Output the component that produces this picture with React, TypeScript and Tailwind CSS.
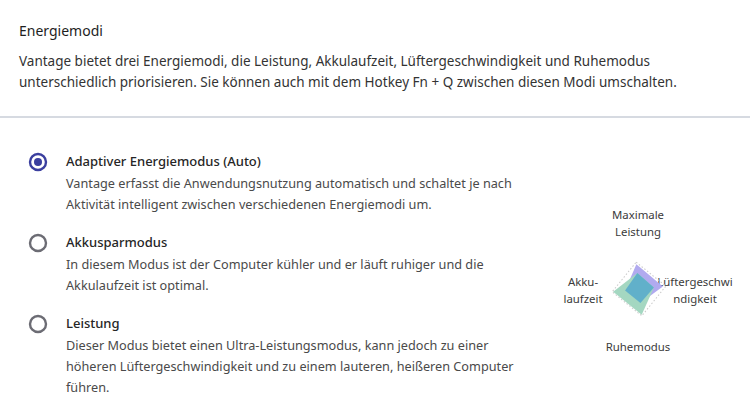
import React from "react";

function Radio({ checked }: { checked?: boolean }) {
  return checked ? (
    <svg width="20" height="20" viewBox="0 0 20 20" className="shrink-0">
      <circle cx="10" cy="10" r="8" fill="none" stroke="#3b3f9f" strokeWidth="2.4" />
      <circle cx="10" cy="10" r="4" fill="#3b3f9f" />
    </svg>
  ) : (
    <svg width="20" height="20" viewBox="0 0 20 20" className="shrink-0">
      <circle cx="10" cy="10" r="8" fill="none" stroke="#6c6c74" strokeWidth="2.4" />
    </svg>
  );
}

function Item({ checked, title, lines }: { checked?: boolean; title: string; lines: string[] }) {
  return (
    <div className="flex gap-[18px]">
      <div className="pt-px">
        <Radio checked={checked} />
      </div>
      <div>
        <div className="text-[13px] leading-[21px] font-medium text-[#262626]">{title}</div>
        <div className="mt-px text-[12.7px] leading-[21px] text-[#4a4a4a]">
          {lines.map((l, i) => (
            <div key={i}>{l}</div>
          ))}
        </div>
      </div>
    </div>
  );
}

function Chart() {
  return (
    <div className="relative w-[200px] h-[160px] text-[11.4px] leading-[17px] text-[#3c3c3c]">
      <div className="absolute left-[53px] top-[6px] w-[80px] text-center">
        Maximale
        <br />
        Leistung
      </div>
      <div className="absolute left-[13px] top-[73px] w-[50px] text-center">
        Akku-
        <br />
        laufzeit
      </div>
      <div className="absolute left-[111px] top-[73px] w-[78px] text-center break-all">
        Lüftergeschwindigkeit
      </div>
      <div className="absolute left-[53px] top-[138px] w-[80px] text-center">Ruhemodus</div>
      <svg className="absolute left-[64px] top-[59px]" width="60" height="60" viewBox="-30 -30 60 60">
        <g transform="rotate(-6)">
          <polygon
            points="0,-27 27,0 0,27 -27,0"
            fill="none"
            stroke="#c9c9c9"
            strokeWidth="1"
            strokeDasharray="1.5 2"
          />
          <polygon points="0,-25 24,0 0,14 -14,0" fill="#b1aaef" />
          <polygon points="0,-16 15,0 0,26 -26,0" fill="#a4d7c1" />
          <polygon points="0,-16 15,0 0,14 -14,0" fill="#61b0ca" />
        </g>
      </svg>
    </div>
  );
}

export default function App() {
  return (
    <div
      className="w-[750px] h-[411px] bg-white overflow-hidden"
      style={{ fontFamily: '"Noto Sans", "Open Sans", sans-serif' }}
    >
      <div className="px-[19px] pt-[21px] h-[116px]">
        <div className="text-[14px] leading-[20px] text-[#1e1e1e]">Energiemodi</div>
        <div className="mt-[10px] text-[13.5px] leading-[21px] text-[#333]">
          Vantage bietet drei Energiemodi, die Leistung, Akkulaufzeit, Lüftergeschwindigkeit und Ruhemodus
          <br />
          unterschiedlich priorisieren. Sie können auch mit dem Hotkey Fn + Q zwischen diesen Modi umschalten.
        </div>
      </div>
      <div className="h-[2px] bg-[#d6dae1]" />
      <div className="flex">
        <div className="pl-[28px] pt-[33px] w-[545px] flex flex-col gap-[17px]">
          <Item
            checked
            title="Adaptiver Energiemodus (Auto)"
            lines={[
              "Vantage erfasst die Anwendungsnutzung automatisch und schaltet je nach",
              "Aktivität intelligent zwischen verschiedenen Energiemodi um.",
            ]}
          />
          <Item
            title="Akkusparmodus"
            lines={[
              "In diesem Modus ist der Computer kühler und er läuft ruhiger und die",
              "Akkulaufzeit ist optimal.",
            ]}
          />
          <Item
            title="Leistung"
            lines={[
              "Dieser Modus bietet einen Ultra-Leistungsmodus, kann jedoch zu einer",
              "höheren Lüftergeschwindigkeit und zu einem lauteren, heißeren Computer",
              "führen.",
            ]}
          />
        </div>
        <div className="pt-[82px]">
          <Chart />
        </div>
      </div>
    </div>
  );
}
